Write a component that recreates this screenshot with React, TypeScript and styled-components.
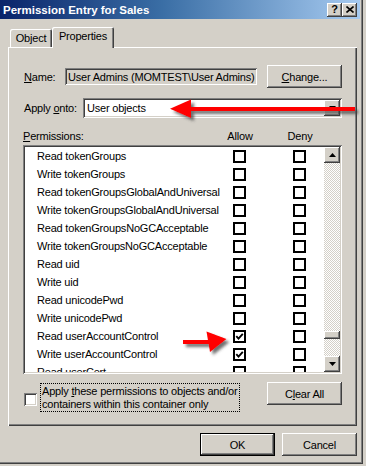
import React from 'react';
import styled, { createGlobalStyle, css } from 'styled-components';

const FACE = '#d4d0c8';
const FONT = '"Liberation Sans", Arial, sans-serif';

const Global = createGlobalStyle`
  html, body { margin: 0; padding: 0; background: ${FACE}; }
  body { font-family: ${FONT}; font-size: 11px; letter-spacing: -0.2px; color: #000; }
  * { box-sizing: border-box; }
`;

const raised = css`
  box-shadow: inset -1px -1px #404040, inset 1px 1px #fff, inset -2px -2px #808080, inset 2px 2px ${FACE};
`;
const sunken = css`
  box-shadow: inset 1px 1px #808080, inset -1px -1px #fff, inset 2px 2px #404040, inset -2px -2px ${FACE};
`;

const Window = styled.div`
  position: relative;
  width: 363px;
  height: 464px;
  background: ${FACE};
  padding-right: 3px;
  box-shadow: inset -1px -1px #404040, inset -2px -2px #808080;
`;

const TitleBar = styled.div`
  height: 19px;
  display: flex;
  align-items: center;
  padding: 1px 3px 0 3px;
  background: linear-gradient(to right, #0a246a, #3a6ea5 45%, #a6caf0);
`;

const Title = styled.div`
  flex: 1;
  color: #fff;
  font-weight: bold;
  font-size: 11.5px;
  letter-spacing: 0;
  white-space: nowrap;
`;

const CapButton = styled.div`
  width: 15px;
  height: 14px;
  background: ${FACE};
  ${raised};
  display: flex;
  align-items: center;
  justify-content: center;
  font-weight: bold;
  font-size: 11px;
  line-height: 1;
  padding-bottom: 1px;
`;

const Content = styled.div`
  padding: 8px 0 0 8px;
  width: 357px;
`;

const Tabs = styled.div`
  display: flex;
  align-items: flex-end;
  height: 20px;
  padding-left: 2px;
`;

const Tab = styled.div<{ $active?: boolean }>`
  position: relative;
  z-index: ${(p) => (p.$active ? 2 : 1)};
  width: ${(p) => (p.$active ? 62 : 42)}px;
  height: ${(p) => (p.$active ? 21 : 18)}px;
  margin-bottom: ${(p) => (p.$active ? -1 : 0)}px;
  padding-bottom: ${(p) => (p.$active ? 3 : 0)}px;
  background: ${FACE};
  border-radius: 2px 2px 0 0;
  box-shadow: inset 1px 1px #fff, inset -1px 0 #404040, inset -2px 0 #808080;
  display: flex;
  align-items: center;
  justify-content: center;
  white-space: nowrap;
`;

const Panel = styled.div`
  width: 349px;
  height: 379px;
  padding: 18px 15px 0 15px;
  background: ${FACE};
  box-shadow: inset 1px 1px #fff, inset -1px -1px #404040, inset -2px -2px #808080;
  display: flex;
  flex-direction: column;
`;

const Row = styled.div<{ $h: number; $mt?: number }>`
  display: flex;
  align-items: center;
  height: ${(p) => p.$h}px;
  margin-top: ${(p) => p.$mt ?? 0}px;
`;

const Label = styled.div<{ $w: number }>`
  width: ${(p) => p.$w}px;
  padding-left: 1px;
  white-space: nowrap;
`;

const U = styled.span`
  text-decoration: underline;
`;

const ReadOnlyBox = styled.div`
  width: 192px;
  height: 17px;
  background: ${FACE};
  ${sunken};
  padding: 0 0 0 3px;
  display: flex;
  align-items: center;
  white-space: nowrap;
  overflow: hidden;
`;

const Button = styled.button<{ $default?: boolean }>`
  width: 75px;
  height: 23px;
  margin-left: auto;
  padding: 0;
  border: none;
  background: ${FACE};
  font-family: ${FONT};
  font-size: 11px;
  letter-spacing: -0.2px;
  color: #000;
  ${(p) =>
    p.$default
      ? css`box-shadow: inset 0 0 0 1px #000, inset -2px -2px #404040, inset 2px 2px #fff, inset -3px -3px #808080;`
      : raised};
`;

const Combo = styled.div`
  flex: 1;
  height: 20px;
  background: #fff;
  ${sunken};
  padding: 2px 2px 2px 4px;
  display: flex;
  align-items: center;
`;

const ComboText = styled.div`
  flex: 1;
  white-space: nowrap;
`;

const SmallButton = styled.div`
  width: 16px;
  height: 16px;
  background: ${FACE};
  ${raised};
  display: flex;
  align-items: center;
  justify-content: center;
`;

const Headers = styled.div`
  display: grid;
  grid-template-columns: 187px 60px 60px 1fr;
  height: 13px;
  line-height: 13px;
  margin-top: 12px;
`;

const HeadCell = styled.div<{ $center?: boolean }>`
  text-align: ${(p) => (p.$center ? 'center' : 'left')};
  white-space: nowrap;
`;

const ListBox = styled.div`
  margin-top: 2px;
  height: 229px;
  background: #fff;
  ${sunken};
  padding: 2px;
  display: flex;
`;

const Rows = styled.div`
  flex: 1;
  overflow: hidden;
`;

const PermRow = styled.div`
  display: grid;
  grid-template-columns: 208px 60px 1fr;
  align-items: center;
  height: 18px;
`;

const PermName = styled.div`
  padding-left: 12px;
  white-space: nowrap;
`;

const FlatCheck = styled.div`
  width: 13px;
  height: 13px;
  border: 2px solid #000;
  background: #fff;
  display: flex;
  align-items: center;
  justify-content: center;
`;

const ScrollBar = styled.div`
  width: 16px;
  display: flex;
  flex-direction: column;
`;

const Track = styled.div`
  flex: 1;
  background-color: #fff;
  background-image: conic-gradient(${FACE} 25%, #fff 0 50%, ${FACE} 0 75%, #fff 0);
  background-size: 2px 2px;
`;

const Thumb = styled.div<{ $top: number }>`
  margin-top: ${(p) => p.$top}px;
  height: 8px;
  background: ${FACE};
  ${raised};
`;

const BottomRow = styled.div`
  display: flex;
  align-items: flex-start;
  margin-top: 8px;
  height: 30px;
`;

const Check3D = styled.div`
  width: 13px;
  height: 13px;
  margin: 11px 0 0 1px;
  background: #fff;
  ${sunken};
`;

const FocusLabel = styled.div`
  margin: 1px 0 0 3px;
  width: 200px;
  height: 29px;
  border: 1px dotted #000;
  padding: 1px 0 0 1px;
  line-height: 13px;
  white-space: nowrap;
`;

const Footer = styled.div`
  display: flex;
  justify-content: flex-end;
  gap: 7px;
  margin-top: 7px;
  width: 349px;
`;

const FooterButton = styled(Button)`
  margin-left: 0;
`;

const Overlay = styled.svg`
  position: absolute;
  left: 0;
  top: 0;
  pointer-events: none;
`;

const CheckMark = () => (
  <svg width="9" height="9" viewBox="0 0 9 9">
    <path d="M1.3 4.2 L3.5 6.6 L7.8 1.8" fill="none" stroke="#000" strokeWidth="1.9" />
  </svg>
);

const TriUp = () => (
  <svg width="7" height="4" viewBox="0 0 7 4">
    <polygon points="3.5,0 7,4 0,4" fill="#000" />
  </svg>
);

const TriDown = () => (
  <svg width="7" height="4" viewBox="0 0 7 4">
    <polygon points="0,0 7,0 3.5,4" fill="#000" />
  </svg>
);

const perms = [
  'Read tokenGroups',
  'Write tokenGroups',
  'Read tokenGroupsGlobalAndUniversal',
  'Write tokenGroupsGlobalAndUniversal',
  'Read tokenGroupsNoGCAcceptable',
  'Write tokenGroupsNoGCAcceptable',
  'Read uid',
  'Write uid',
  'Read unicodePwd',
  'Write unicodePwd',
  'Read userAccountControl',
  'Write userAccountControl',
  'Read userCert',
];
const allowed = new Set([10, 11]);

export default function App() {
  return (
    <>
      <Global />
      <Window>
        <TitleBar>
          <Title>Permission Entry for Sales</Title>
          <CapButton>?</CapButton>
          <CapButton>
            <svg width="8" height="7" viewBox="0 0 8 7">
              <path d="M0.5 0.5 L7.5 6.5 M7.5 0.5 L0.5 6.5" stroke="#000" strokeWidth="1.6" />
            </svg>
          </CapButton>
        </TitleBar>
        <Content>
          <Tabs>
            <Tab>Object</Tab>
            <Tab $active>Properties</Tab>
          </Tabs>
          <Panel>
            <Row $h={23}>
              <Label $w={42}>
                <U>N</U>ame:
              </Label>
              <ReadOnlyBox>User Admins (MOMTEST\User Admins)</ReadOnlyBox>
              <Button>
                <U>C</U>hange...
              </Button>
            </Row>
            <Row $h={20} $mt={10}>
              <Label $w={60}>
                Apply <U>o</U>nto:
              </Label>
              <Combo>
                <ComboText>User objects</ComboText>
                <SmallButton>
                  <TriDown />
                </SmallButton>
              </Combo>
            </Row>
            <Headers>
              <HeadCell>
                <U>P</U>ermissions:
              </HeadCell>
              <HeadCell $center>Allow</HeadCell>
              <HeadCell $center>Deny</HeadCell>
            </Headers>
            <ListBox>
              <Rows>
                {perms.map((p, i) => (
                  <PermRow key={p}>
                    <PermName>{p}</PermName>
                    <FlatCheck>{allowed.has(i) && <CheckMark />}</FlatCheck>
                    <FlatCheck />
                  </PermRow>
                ))}
              </Rows>
              <ScrollBar>
                <SmallButton>
                  <TriUp />
                </SmallButton>
                <Track>
                  <Thumb $top={168} />
                </Track>
                <SmallButton>
                  <TriDown />
                </SmallButton>
              </ScrollBar>
            </ListBox>
            <BottomRow>
              <Check3D />
              <FocusLabel>
                Apply <U>t</U>hese permissions to objects and/or
                <br />
                containers within this container only
              </FocusLabel>
              <Button>
                C<U>l</U>ear All
              </Button>
            </BottomRow>
          </Panel>
          <Footer>
            <FooterButton $default>OK</FooterButton>
            <FooterButton>Cancel</FooterButton>
          </Footer>
        </Content>
        <Overlay width="366" height="466" viewBox="0 0 366 466">
          <defs>
            <filter id="sh" x="-10%" y="-50%" width="130%" height="250%">
              <feDropShadow dx="3" dy="3" stdDeviation="1.6" floodColor="#404040" floodOpacity="0.75" />
            </filter>
          </defs>
          <g fill="#ff0000" filter="url(#sh)">
            <rect x="188" y="107" width="167" height="4" />
            <polygon points="170,108.8 191,99.5 191,118" />
          </g>
          <g fill="#ff0000" filter="url(#sh)">
            <rect x="183" y="340" width="26" height="4" />
            <polygon points="206.5,331.5 226.5,339 210,352" />
          </g>
        </Overlay>
      </Window>
    </>
  );
}
